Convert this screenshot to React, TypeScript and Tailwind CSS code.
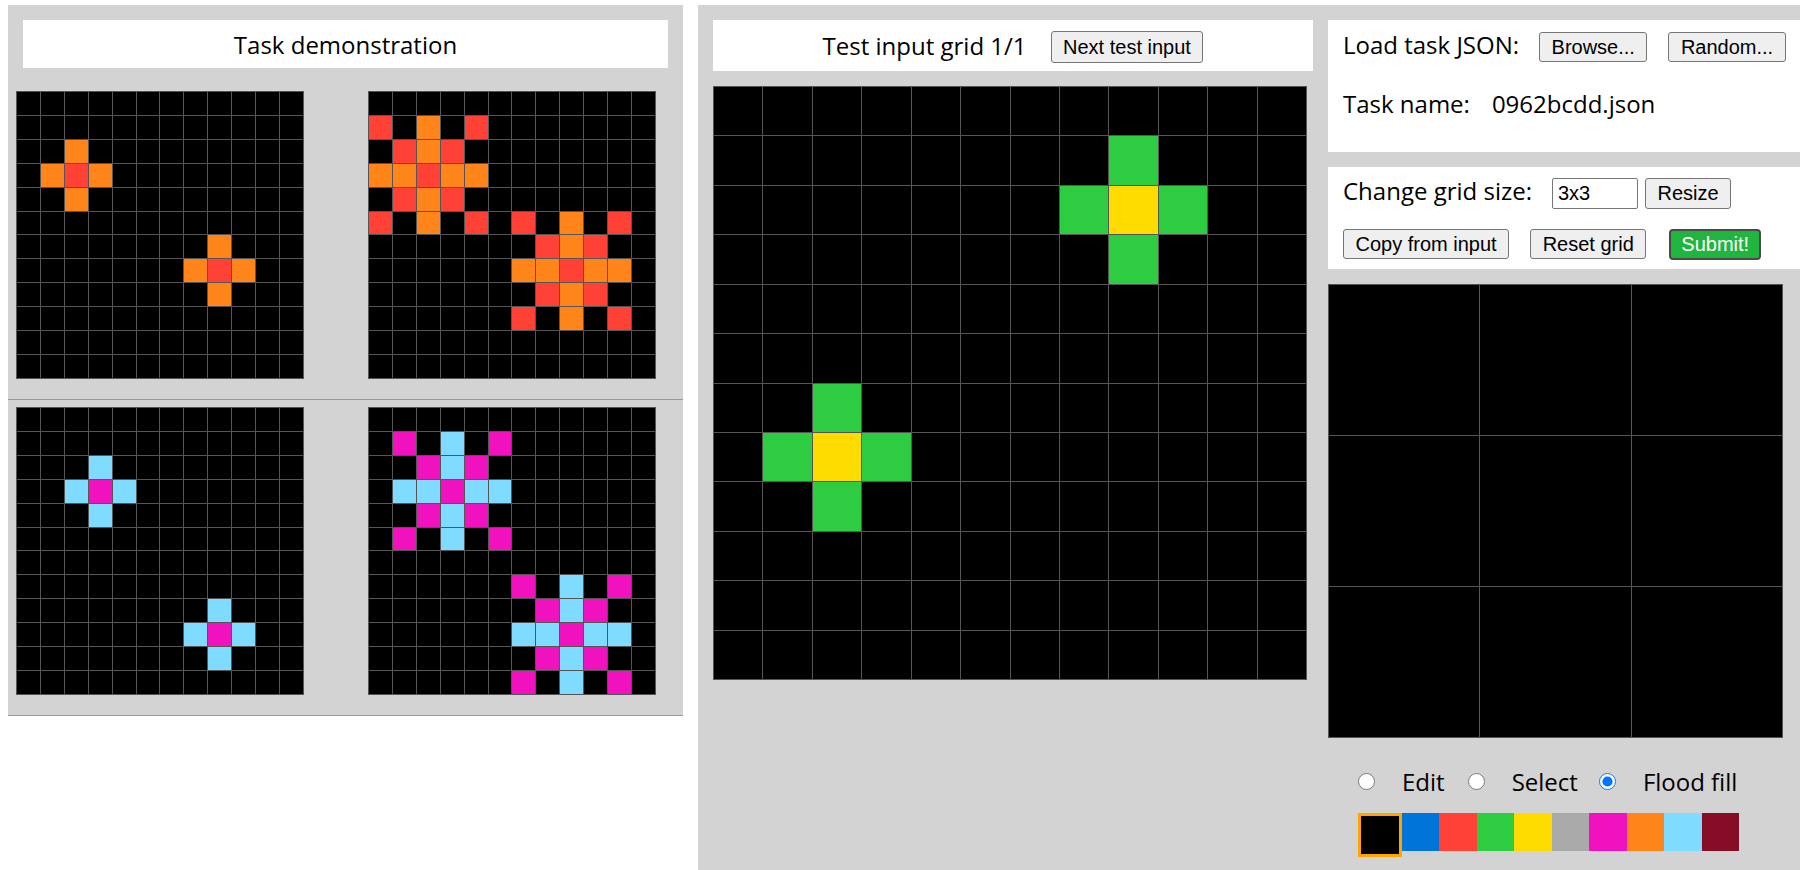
import { ReactNode } from "react"

const COLORS = [
  "bg-[#000000]",
  "bg-[#0074d9]",
  "bg-[#ff4136]",
  "bg-[#2ecc40]",
  "bg-[#ffdc00]",
  "bg-[#aaaaaa]",
  "bg-[#f012be]",
  "bg-[#ff851b]",
  "bg-[#7fdbff]",
  "bg-[#870c25]",
]

const blank = (n: number) => Array.from({ length: n }, () => Array(n).fill(0) as number[])

// small cross: centre + 4 arms
const cross = (g: number[][], r: number, c: number, center: number, arm: number) => {
  g[r][c] = center
  g[r - 1][c] = arm
  g[r + 1][c] = arm
  g[r][c - 1] = arm
  g[r][c + 1] = arm
  return g
}

// expanded star: arms at distance 1 and 2, diagonals in centre colour
const star = (g: number[][], r: number, c: number, center: number, arm: number) => {
  g[r][c] = center
  for (const d of [1, 2]) {
    g[r - d][c] = arm
    g[r + d][c] = arm
    g[r][c - d] = arm
    g[r][c + d] = arm
    g[r - d][c - d] = center
    g[r - d][c + d] = center
    g[r + d][c - d] = center
    g[r + d][c + d] = center
  }
  return g
}

const pairs = [
  {
    input: cross(cross(blank(12), 3, 2, 2, 7), 7, 8, 2, 7),
    output: star(star(blank(12), 3, 2, 2, 7), 7, 8, 2, 7),
  },
  {
    input: cross(cross(blank(12), 3, 3, 6, 8), 9, 8, 6, 8),
    output: star(star(blank(12), 3, 3, 6, 8), 9, 8, 6, 8),
  },
]

const testInput = cross(cross(blank(12), 2, 8, 4, 3), 7, 2, 4, 3)
const outputGrid = blank(3)

const Grid = ({ cells, className }: { cells: number[][]; className: string }) => (
  <div className={`grid shrink-0 gap-px bg-[#555] p-px ${className}`}>
    {cells.flat().map((v, i) => (
      <div key={i} className={COLORS[v]} />
    ))}
  </div>
)

const Btn = ({ children, className = "" }: { children: ReactNode; className?: string }) => (
  <button
    className={`h-[30px] shrink-0 rounded-[3px] border border-[#767676] bg-[#efefef] px-[11.5px] font-['Liberation_Sans',Arial,sans-serif] text-[20px] leading-[23px] text-black ${className}`}
  >
    {children}
  </button>
)

const Radio = ({ label, checked, className = "" }: { label: string; checked?: boolean; className?: string }) => (
  <>
    <input
      type="radio"
      name="tool"
      defaultChecked={checked}
      className={`m-0 h-[17px] w-[17px] shrink-0 ${className}`}
    />
    <span className="ml-[27px]">{label}</span>
  </>
)

export default function App() {
  return (
    <div className="flex items-start bg-white pt-[5px] font-['Open_Sans',sans-serif] text-[24px] leading-[33px] text-black">
      {/* Task demonstration */}
      <div className="ml-[8px] w-[675px] shrink-0 bg-[#d3d3d3]">
        <div className="mx-[15px] mt-[15px] flex h-[48px] items-center justify-center bg-white">
          Task demonstration
        </div>
        {pairs.map((p, i) => (
          <div
            key={i}
            className={`flex gap-[64px] border-b border-[#999] pb-[20px] pl-[8px] ${i === 0 ? "pt-[23px]" : "pt-[7px]"}`}
          >
            <Grid cells={p.input} className="h-[288px] w-[288px] grid-cols-12 grid-rows-12" />
            <Grid cells={p.output} className="h-[288px] w-[288px] grid-cols-12 grid-rows-12" />
          </div>
        ))}
      </div>

      {/* Workspace */}
      <div className="ml-[15px] flex h-[865px] w-[1102px] shrink-0 gap-[15px] bg-[#d3d3d3] pl-[15px] pt-[15px]">
        <div className="w-[600px] shrink-0">
          <div className="flex h-[51px] items-center justify-center gap-[24px] bg-white">
            <span>Test input grid 1/1</span>
            <Btn className="mt-[3px] h-[32px]">Next test input</Btn>
          </div>
          <Grid cells={testInput} className="mt-[15px] h-[594px] w-[594px] grid-cols-12 grid-rows-12" />
        </div>

        <div className="w-[472px] shrink-0">
          <div className="bg-white pb-[32px] pl-[15px] pt-[8px]">
            <div className="flex items-start">
              <span>Load task JSON:</span>
              <Btn className="ml-[20px] mt-[4px]">Browse...</Btn>
              <Btn className="ml-[21px] mt-[4px]">Random...</Btn>
            </div>
            <div className="mt-[25px] flex">
              <span>Task name:</span>
              <span className="ml-[22px]">0962bcdd.json</span>
            </div>
          </div>

          <div className="mt-[15px] bg-white pb-[9px] pl-[15px] pt-[7px]">
            <div className="flex items-start">
              <span>Change grid size:</span>
              <input
                defaultValue="3x3"
                className="ml-[20px] mt-[4px] h-[31px] w-[86px] rounded-[2px] border border-[#767676] bg-white px-[5px] font-['Liberation_Sans',Arial,sans-serif] text-[20px] text-black outline-none"
              />
              <Btn className="ml-[7px] mt-[4px] h-[31px]">Resize</Btn>
            </div>
            <div className="mt-[20px] flex">
              <Btn>Copy from input</Btn>
              <Btn className="ml-[21px]">Reset grid</Btn>
              <button className="ml-[23px] h-[31px] rounded-[4px] border-2 border-[#4a4a4a] bg-[#1fb53e] px-[10px] font-['Liberation_Sans',Arial,sans-serif] text-[20px] leading-[23px] text-white">
                Submit!
              </button>
            </div>
          </div>

          <Grid cells={outputGrid} className="mt-[15px] h-[454px] w-[455px] grid-cols-3 grid-rows-3" />

          <div className="mt-[27px] flex h-[33px] items-center pl-[30px]">
            <Radio label="Edit" />
            <Radio label="Select" className="ml-[23px]" />
            <Radio label="Flood fill" checked className="ml-[21px]" />
          </div>

          <div className="mt-[15px] flex items-start pl-[30px]">
            <div className="h-[43.5px] w-[43.5px] border-[3px] border-[#ffa500] bg-black" />
            {COLORS.slice(1).map((c) => (
              <div key={c} className={`h-[37.5px] w-[37.5px] ${c}`} />
            ))}
          </div>
        </div>
      </div>
    </div>
  )
}
